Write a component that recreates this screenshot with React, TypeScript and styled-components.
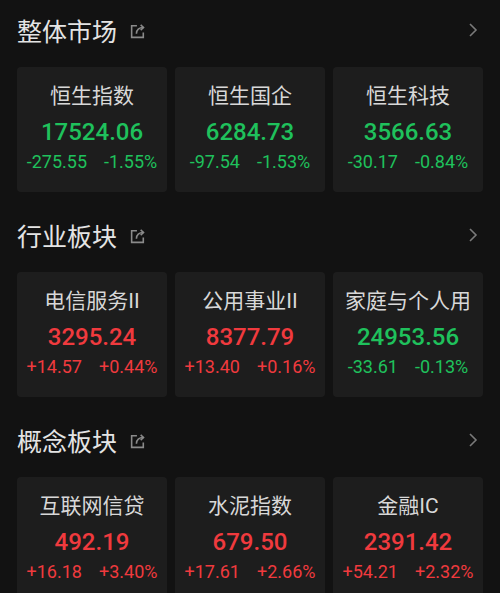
import styled, { createGlobalStyle } from 'styled-components';

const GlobalStyle = createGlobalStyle`
  html, body {
    margin: 0;
    padding: 0;
    background: #121212;
  }
  body {
    font-family: Roboto, "Noto Sans CJK SC", sans-serif;
  }
`;

type Trend = 'up' | 'down';

interface Quote {
  name: string;
  value: string;
  change: string;
  percent: string;
  trend: Trend;
}

interface Block {
  title: string;
  items: Quote[];
}

const blocks: Block[] = [
  {
    title: '整体市场',
    items: [
      { name: '恒生指数', value: '17524.06', change: '-275.55', percent: '-1.55%', trend: 'down' },
      { name: '恒生国企', value: '6284.73', change: '-97.54', percent: '-1.53%', trend: 'down' },
      { name: '恒生科技', value: '3566.63', change: '-30.17', percent: '-0.84%', trend: 'down' },
    ],
  },
  {
    title: '行业板块',
    items: [
      { name: '电信服务II', value: '3295.24', change: '+14.57', percent: '+0.44%', trend: 'up' },
      { name: '公用事业II', value: '8377.79', change: '+13.40', percent: '+0.16%', trend: 'up' },
      { name: '家庭与个人用', value: '24953.56', change: '-33.61', percent: '-0.13%', trend: 'down' },
    ],
  },
  {
    title: '概念板块',
    items: [
      { name: '互联网信贷', value: '492.19', change: '+16.18', percent: '+3.40%', trend: 'up' },
      { name: '水泥指数', value: '679.50', change: '+17.61', percent: '+2.66%', trend: 'up' },
      { name: '金融IC', value: '2391.42', change: '+54.21', percent: '+2.32%', trend: 'up' },
    ],
  },
];

const colors: Record<Trend, string> = {
  up: '#f03a3e',
  down: '#1fc15c',
};

const Page = styled.div`
  display: flex;
  flex-direction: column;
  gap: 17px;
  padding: 4px 17px 0;
  height: 593px;
  overflow: hidden;
  box-sizing: border-box;
`;

const Section = styled.section`
  display: flex;
  flex-direction: column;
`;

const Header = styled.div`
  display: flex;
  align-items: center;
  height: 52px;
  margin-bottom: 11px;
`;

const Title = styled.h2`
  margin: 0;
  font-family: "Noto Sans CJK SC", sans-serif;
  font-size: 25px;
  font-weight: 400;
  color: #e4e4e4;
`;

const ShareIcon = styled.svg`
  margin-left: 12px;
  margin-top: 2px;
`;

const Chevron = styled.svg`
  margin-left: auto;
  margin-right: 4px;
`;

const Grid = styled.div`
  display: grid;
  grid-template-columns: repeat(3, 150px);
  gap: 8px;
`;

const Card = styled.div`
  height: 125px;
  background: #1d1d1d;
  border-radius: 4px;
  display: flex;
  flex-direction: column;
  align-items: center;
  padding-top: 15px;
  box-sizing: border-box;
`;

const Name = styled.div`
  font-family: Roboto, "Noto Sans CJK SC", sans-serif;
  font-size: 21px;
  line-height: 28px;
  color: #d8d8d8;
  white-space: nowrap;
`;

const Value = styled.div<{ $trend: Trend }>`
  margin-top: 6px;
  font-size: 24px;
  line-height: 32px;
  font-weight: 500;
  color: ${(p) => colors[p.$trend]};
`;

const Changes = styled.div<{ $trend: Trend }>`
  margin-top: 3px;
  display: flex;
  gap: 17px;
  font-size: 18px;
  line-height: 22px;
  color: ${(p) => colors[p.$trend]};
`;

const Share = () => (
  <ShareIcon width="18" height="18" viewBox="0 0 17 17" fill="none" stroke="#8a8a8a" strokeWidth="1.5">
    <path d="M7.5 3.5H2.5v11h11v-4.5" />
    <path d="M7 11c0-3.6 2.6-5.8 6.5-5.8" />
    <path d="M11 2.7l2.7 2.5-2.7 2.5" />
  </ShareIcon>
);

const Arrow = () => (
  <Chevron width="12" height="16" viewBox="0 0 12 16" fill="none" stroke="#7a7a7a" strokeWidth="1.6">
    <path d="M3 2l6 6-6 6" />
  </Chevron>
);

export default function App() {
  return (
    <>
      <GlobalStyle />
      <Page>
        {blocks.map((b) => (
          <Section key={b.title}>
            <Header>
              <Title>{b.title}</Title>
              <Share />
              <Arrow />
            </Header>
            <Grid>
              {b.items.map((q) => (
                <Card key={q.name}>
                  <Name>{q.name}</Name>
                  <Value $trend={q.trend}>{q.value}</Value>
                  <Changes $trend={q.trend}>
                    <span>{q.change}</span>
                    <span>{q.percent}</span>
                  </Changes>
                </Card>
              ))}
            </Grid>
          </Section>
        ))}
      </Page>
    </>
  );
}
